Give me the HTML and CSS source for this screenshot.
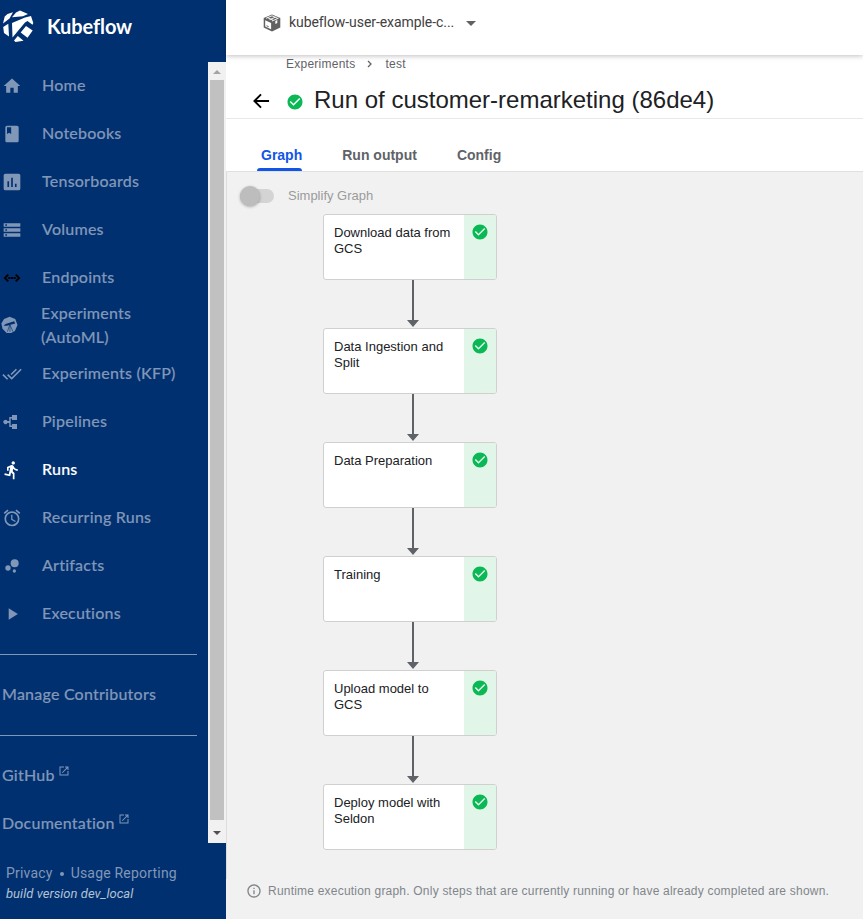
FILE: index.html
```html
<!DOCTYPE html>
<html lang="en">
<head>
<meta charset="utf-8">
<title>Kubeflow</title>
<link rel="stylesheet" href="styles.css">
</head>
<body>
<svg width="0" height="0" class="defs">
  <symbol id="check" viewBox="0 0 24 24"><path d="M12 2C6.480 2 2 6.480 2 12s4.480 10 10 10 10-4.480 10-10S17.520 2 12 2zm-2 15l-5-5 1.410-1.410L10 14.170l7.590-7.590L19 8l-9 9z"/></symbol>
  <symbol id="launch" viewBox="0 0 24 24"><path d="M19 19H5V5h7V3H3v18h18v-9h-2v7zM14 3v2h3.590l-9.830 9.830 1.410 1.410L19 6.410V10h2V3h-7z"/></symbol>
  <symbol id="edge" viewBox="0 0 12 48"><path d="M5 0h2v40h5l-6 7-6-7h5z"/></symbol>
</svg>
<div class="app">
  <aside class="sidebar">
    <div class="brand">
      <svg class="logo" viewBox="0 0 32 32"><path d="M1 13.500L2.700 6.500 5.500 4 11 2.300 7.500 8.500zM10 7.300L14 2.500 18 .5 26 4 21 6.200zM10 13L23 7.500 29 6 31.300 13 30.500 14.800 25.500 11 23 12.500 10.500 27.500zM1.200 17L6.300 13.800 7 26.500 2 23zM24 16L30.700 20.500 25.500 27.700 18.700 22.500zM15.800 26L21.500 30.700 13.500 32 12 30.500z"/></svg>
      <span>Kubeflow</span>
    </div>
    <div class="scroller">
      <nav class="menu">
        <a class="item"><svg viewBox="0 0 24 24"><path d="M10 20v-6h4v6h5v-8h3L12 3 2 12h3v8z"/></svg><span>Home</span></a>
        <a class="item"><svg viewBox="0 0 24 24"><path d="M18 2H6c-1.100 0-2 .9-2 2v16c0 1.100.9 2 2 2h12c1.100 0 2-.9 2-2V4c0-1.100-.9-2-2-2zM6 4h5v8l-2.500-1.500L6 12V4z"/></svg><span>Notebooks</span></a>
        <a class="item"><svg viewBox="0 0 24 24"><path d="M20 2H4a2 2 0 0 0-2 2v16a2 2 0 0 0 2 2h16a2 2 0 0 0 2-2V4a2 2 0 0 0-2-2zM8.500 18h-2v-7h2v7zm4.500 0h-2V7h2v11zm4.500 0h-2v-4h2v4z"/></svg><span>Tensorboards</span></a>
        <a class="item"><svg viewBox="0 0 24 24"><path d="M2 20h20v-4H2v4zm2-3h2v2H4v-2zM2 4v4h20V4H2zm4 3H4V5h2v2zm-4 7h20v-4H2v4zm2-3h2v2H4v-2z"/></svg><span>Volumes</span></a>
        <a class="item endpoints"><svg viewBox="0 0 24 24"><path d="M7.500 8l-4 4 4 4M16.500 8l4 4-4 4M7.500 12h2.200m.6 0h3.400m.6 0h2.200" fill="none" stroke="currentColor" stroke-width="2.300"/></svg><span>Endpoints</span></a>
        <a class="item automl"><svg viewBox="0 0 24 24"><path d="M11.500 1l7.500 3 3 8-3.500 8-5 2.500h-6L2 17 .5 10 4 4z"/><path d="M3.500 13l2.500-2.500L17.500 7l1.500 3-11 3z" fill="#003070"/><path d="M11.500 12l-3 9M12 12v9M12 12l4 9" fill="none" stroke="#003070" stroke-width=".8"/></svg><span>Experiments (AutoML)</span></a>
        <a class="item"><svg viewBox="0 0 24 24"><path d="M18 7l-1.410-1.410-6.340 6.340 1.410 1.410L18 7zm4.240-1.410L11.660 16.170 7.480 12l-1.410 1.410L11.660 19l12-12-1.420-1.410zM.41 13.410L6 19l1.410-1.410L1.830 12 .41 13.410z"/></svg><span>Experiments (KFP)</span></a>
        <a class="item"><svg viewBox="0 0 24 24"><path d="M12 3.500h6v6h-6V7.800h-1.600v8.400H12v-1.700h6v6h-6v-2.600H8.700v-4.800H6.500a2.500 2.500 0 1 1 0-2.200h2.200V6.100H12z"/></svg><span>Pipelines</span></a>
        <a class="item active"><svg viewBox="0 0 24 24"><path d="M13.490 5.480c1.100 0 2-.9 2-2s-.9-2-2-2-2 .9-2 2 .9 2 2 2zm-3.600 13.900l1-4.400 2.100 2v6h2v-7.500l-2.100-2 .6-3c1.300 1.500 3.300 2.500 5.500 2.500v-2c-1.900 0-3.500-1-4.300-2.400l-1-1.600c-.4-.6-1-1-1.700-1-.3 0-.5.1-.8.1l-5.200 2.200v4.700h2v-3.400l1.800-.7-1.600 8.100-4.900-1-.4 2 7 1.400z"/></svg><span>Runs</span></a>
        <a class="item"><svg viewBox="0 0 24 24"><path d="M22 5.720l-4.600-3.860-1.290 1.530 4.600 3.860L22 5.720zM7.880 3.390L6.600 1.860 2 5.710l1.290 1.530 4.590-3.850zM12.500 8H11v6l4.750 2.850.75-1.230-4-2.370V8zM12 4c-4.970 0-9 4.030-9 9s4.020 9 9 9a9 9 0 0 0 0-18zm0 16c-3.870 0-7-3.130-7-7s3.130-7 7-7 7 3.130 7 7-3.130 7-7 7z"/></svg><span>Recurring Runs</span></a>
        <a class="item"><svg viewBox="0 0 24 24"><circle cx="7.200" cy="14.400" r="3.200"/><circle cx="14.800" cy="18" r="2"/><circle cx="15.200" cy="8.800" r="4.800"/></svg><span>Artifacts</span></a>
        <a class="item"><svg viewBox="0 0 24 24"><path d="M8 5v14l11-7z"/></svg><span>Executions</span></a>
        <hr>
        <a class="item plain">Manage Contributors</a>
        <hr>
        <a class="item plain">GitHub<svg><use href="#launch"/></svg></a>
        <a class="item plain">Documentation<svg><use href="#launch"/></svg></a>
      </nav>
      <div class="scrollbar"><i class="up"></i><div class="thumb"></div><i class="down"></i></div>
    </div>
    <footer class="legal"><div>Privacy<b></b>Usage Reporting</div><em>build version dev_local</em></footer>
  </aside>
  <main class="main">
    <header class="topbar">
      <svg class="cube" viewBox="0 0 18 18"><path d="M9 .5L17.300 4v9.500L9 17.500.7 13.500V4z" fill="#616161"/><path d="M2.200 6.300l5.900 2.700v6.200L2.200 12.500z" fill="#fff"/><path d="M3 4.300l6-2.500M6.500 5.700l6-2.500M4.500 3.600l5.500 2.600M9 1.800l5.500 2.400M9 7l6.500-2.800" stroke="#fff" stroke-width=".9" fill="none"/><path d="M3.500 11.700l2.200 1" stroke="#616161"/><path d="M12.300 7v3l2-.9V6z" fill="#fff"/></svg>
      <span>kubeflow-user-example-c...</span><i class="caret"></i>
    </header>
    <section class="heading">
      <div class="crumbs"><span>Experiments</span><svg viewBox="0 0 6 8"><path d="M1 1l3 3-3 3" fill="none" stroke="currentColor" stroke-width="1.300"/></svg><span>test</span></div>
      <div class="title">
        <svg class="back" viewBox="0 0 18 16"><path d="M17 8H2M8.500 1L1.500 8l7 7" fill="none" stroke="#000" stroke-width="2"/></svg>
        <svg class="ok"><use href="#check"/></svg>
        <h1>Run of customer-remarketing (86de4)</h1>
      </div>
    </section>
    <nav class="tabs"><a class="on">Graph</a><a>Run output</a><a>Config</a></nav>
    <section class="canvas">
      <label class="toggle"><span class="track"><i></i></span>Simplify Graph</label>
      <div class="graph">
        <div class="node"><span>Download data from GCS</span><div><svg><use href="#check"/></svg></div></div>
        <svg class="edge"><use href="#edge"/></svg>
        <div class="node"><span>Data Ingestion and Split</span><div><svg><use href="#check"/></svg></div></div>
        <svg class="edge"><use href="#edge"/></svg>
        <div class="node"><span>Data Preparation</span><div><svg><use href="#check"/></svg></div></div>
        <svg class="edge"><use href="#edge"/></svg>
        <div class="node"><span>Training</span><div><svg><use href="#check"/></svg></div></div>
        <svg class="edge"><use href="#edge"/></svg>
        <div class="node"><span>Upload model to GCS</span><div><svg><use href="#check"/></svg></div></div>
        <svg class="edge"><use href="#edge"/></svg>
        <div class="node"><span>Deploy model with Seldon</span><div><svg><use href="#check"/></svg></div></div>
      </div>
    </section>
    <footer class="note"><svg viewBox="0 0 24 24"><path d="M11 7h2v2h-2zm0 4h2v6h-2zm1-9C6.480 2 2 6.480 2 12s4.480 10 10 10 10-4.480 10-10S17.520 2 12 2zm0 18c-4.410 0-8-3.590-8-8s3.590-8 8-8 8 3.590 8 8-3.590 8-8 8z"/></svg><span>Runtime execution graph. Only steps that are currently running or have already completed are shown.</span></footer>
  </main>
</div>
</body>
</html>
```
FILE: styles.css
```css
* { box-sizing: border-box; }
body { margin: 0; font-family: "Liberation Sans", Arial, sans-serif; }
svg { fill: currentColor; display: block; flex: none; }
.defs { position: absolute; }
.app { display: flex; width: 863px; height: 919px; overflow: hidden; }

.sidebar { width: 226px; flex: none; background: #003070; color: #8097b8; display: flex; flex-direction: column; }
.brand { height: 62px; display: flex; align-items: flex-start; padding: 10px 0 0 2px; color: #fff; }
.logo { width: 32px; height: 32px; }
.brand span { margin-left: 13px; font: 700 20px/32px Lato, sans-serif; letter-spacing: -.1px; }
.scroller { height: 781px; display: flex; justify-content: space-between; }
.menu { width: 197px; margin-top: -1px; }
.item { height: 48px; display: flex; align-items: center; font: 500 16px/24px Lato, sans-serif; letter-spacing: .22px; -webkit-text-stroke: .15px currentColor; padding: 0 0 1px 2px; }
.item svg { width: 20px; height: 20px; margin-top: 3px; }
.item span { margin-left: 20px; width: 150px; }
.endpoints svg { color: #000; }
.automl { padding-left: 0; }
.automl svg { width: 18px; height: 18px; margin: 0 0 0 1px; }
.automl span { width: 110px; margin-left: 22px; }
.active { color: #fff; }
.menu hr { border: 0; border-top: 1px solid #8097b8; margin: 17px 0 15px; }
.plain svg { width: 12px; height: 12px; margin: -8px 0 0 3px; }
.scrollbar { width: 18px; background: #f1f1f1; padding: 8px 2px 8px; display: flex; flex-direction: column; align-items: center; }
.thumb { width: 14px; height: 740px; background: #c1c1c1; margin: 6px 0 11px; }
.up, .down { border: 4px solid transparent; border-top: 0; border-bottom: 4px solid #a3a3a3; }
.down { border-bottom: 0; border-top: 4px solid #505050; }
.legal { padding: 20px 0 0 6px; font: 14px/20px Roboto, sans-serif; letter-spacing: .2px; }
.legal b { display: inline-block; width: 4px; height: 4px; border-radius: 50%; background: currentColor; margin: 0 7px 2px; }
.legal em { display: block; font-size: 13px; line-height: 22px; letter-spacing: .03px; color: #b3c1d4; }

.main { flex: 1; background: #f1f1f1; display: flex; flex-direction: column; }
.topbar { height: 55px; flex: none; background: #fff; box-shadow: 0 1px 5px rgba(0,0,0,.25); position: relative; display: flex; padding: 14px 0 0 37px; font: 14px/17px Roboto, sans-serif; color: #414141; letter-spacing: -.07px; white-space: nowrap; }
.cube { width: 18px; height: 18px; margin-right: 8px; }
.topbar span { width: 165px; }
.caret { border: 5px solid transparent; border-top-color: #616161; border-bottom: 0; margin: 7px 0 0 12px; height: 5px; }
.heading { height: 64px; flex: none; background: #fff; border-bottom: 1px solid #e8e8e8; }
.crumbs { display: flex; align-items: center; height: 18px; padding-left: 60px; font-size: 12px; letter-spacing: .25px; color: #5f6368; }
.crumbs svg { width: 6px; height: 8px; margin: 0 12px; }
.title { display: flex; align-items: center; height: 32px; margin-top: 12px; padding: 0 0 2px 27px; }
.back { width: 17px; height: 16px; margin-top: 2px; }
.ok { width: 18px; height: 18px; margin: 4px 10px 0 16px; color: #0ab855; }
.title h1 { margin: 0; font-size: 24px; font-weight: 400; line-height: 28px; color: #202124; white-space: nowrap; }
.tabs { height: 53px; flex: none; background: #fff; border-bottom: 1px solid #e0e0e0; display: flex; align-items: flex-end; gap: 32px; padding-left: 31px; font-size: 14px; font-weight: 700; color: #5f6368; }
.tabs a { height: 34px; line-height: 36px; padding: 0 4px; }
.tabs .on { color: #1155e6; }
.tabs .on::after { content: ""; display: block; width: 45px; height: 3px; margin: -5px 0 0 -4px; background: #1155e6; border-radius: 3px 3px 0 0; }
.canvas { height: 707px; flex: none; border-left: 1px solid #ddd; }
.toggle { display: flex; align-items: center; height: 42px; padding: 5px 0 0 13px; font-size: 13px; color: #9b9b9b; }
.track { width: 34px; height: 14px; border-radius: 7px; background: #d4d4d4; margin: 1px 14px 0 0; display: flex; align-items: center; }
.track i { width: 20px; height: 20px; border-radius: 50%; background: #bdbdbd; box-shadow: 0 1px 3px rgba(0,0,0,.3); }
.graph { width: 174px; margin-left: 96px; }
.node { height: 66px; border: 1px solid #d0d0d0; border-radius: 3px; background: #fff; display: flex; overflow: hidden; font-size: 13px; line-height: 16px; color: #202124; }
.node span { flex: 1; padding: 10px 8px 0 10px; }
.node div { width: 32px; background: #e1f6e8; color: #0ab855; padding: 8px 0 0 7px; }
.node svg { width: 18px; height: 18px; }
.edge { width: 12px; height: 48px; margin-left: 84px; color: #5f6368; }
.note { display: flex; align-items: center; height: 24px; padding-left: 20px; font-size: 12px; letter-spacing: .21px; color: #80868b; white-space: nowrap; }
.note svg { width: 16px; height: 16px; margin-right: 6px; }
```
